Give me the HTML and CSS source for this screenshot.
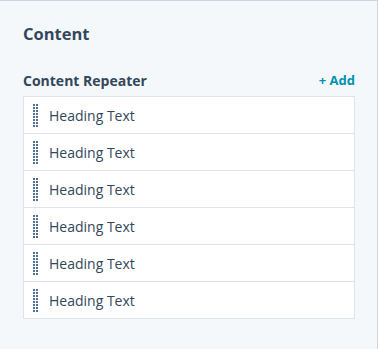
FILE: index.html
```html
<!DOCTYPE html>
<html>
<head>
<meta charset="utf-8">
<link rel="stylesheet" href="styles.css">
</head>
<body>
<div class="panel">
  <h2 class="title">Content</h2>
  <div class="field-head">
    <span class="label">Content Repeater</span>
    <span class="add">+ Add</span>
  </div>
  <ul class="list">
    <li class="row"><span class="handle"></span><span class="text">Heading Text</span></li>
    <li class="row"><span class="handle"></span><span class="text">Heading Text</span></li>
    <li class="row"><span class="handle"></span><span class="text">Heading Text</span></li>
    <li class="row"><span class="handle"></span><span class="text">Heading Text</span></li>
    <li class="row"><span class="handle"></span><span class="text">Heading Text</span></li>
    <li class="row"><span class="handle"></span><span class="text">Heading Text</span></li>
  </ul>
</div>
</body>
</html>
```

FILE: styles.css
```css
html, body {
  margin: 0;
  padding: 0;
  height: 100%;
}
body {
  background: #f5f8fa;
  font-family: "Open Sans", Lato, sans-serif;
  color: #33475b;
}
.panel {
  box-sizing: border-box;
  height: 349px;
  border-top: 1px solid #cbd6e2;
  border-right: 1px solid #cbd6e2;
  padding: 22px 22px 0 23px;
}
.title {
  margin: 0;
  font-size: 16.5px;
  font-weight: 700;
  line-height: 22px;
}
.field-head {
  display: flex;
  justify-content: space-between;
  align-items: center;
  margin-top: 25px;
  height: 20px;
}
.label {
  font-size: 14px;
  font-weight: 700;
}
.add {
  font-size: 13px;
  font-weight: 700;
  color: #0091ae;
}
.list {
  list-style: none;
  margin: 6px 0 0 0;
  padding: 0;
  background: #fff;
  border: 1px solid #dfe3eb;
}
.row {
  display: flex;
  align-items: center;
  height: 36px;
  padding-left: 9px;
  border-top: 1px solid #dfe3eb;
}
.row:first-child {
  border-top: none;
}
.handle {
  width: 5px;
  height: 23px;
  background-image:
    linear-gradient(to right, #516f90 2px, transparent 2px, transparent 3px, #516f90 3px);
  -webkit-mask-image: repeating-linear-gradient(to bottom, #000 0, #000 2px, transparent 2px, transparent 3px);
  mask-image: repeating-linear-gradient(to bottom, #000 0, #000 2px, transparent 2px, transparent 3px);
  margin-right: 11px;
}
.text {
  font-size: 14px;
}
```
